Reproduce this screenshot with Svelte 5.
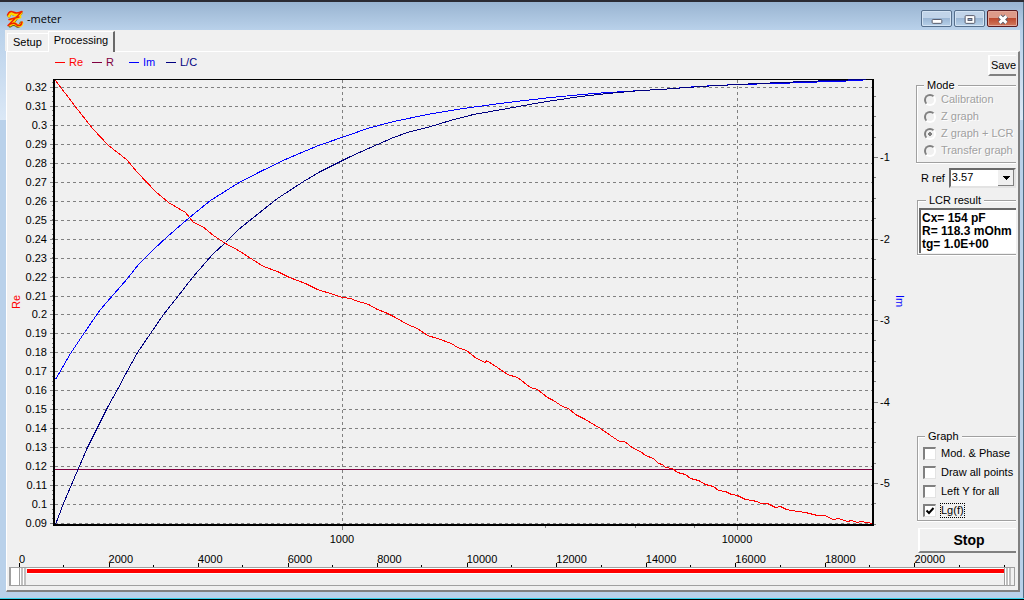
<script lang="ts">
  const yTicks = Array.from({ length: 24 }, (_, i) => ({
    y: Math.round(87 + (i * 436) / 23),
    label: String((32 - i) / 100)
  }));
  const leftMinor = Array.from({ length: 93 }, (_, i) => Math.round(82 + i * 4.74));
  const rightTicks = [1, 2, 3, 4, 5].map((n) => ({ y: Math.floor(76 + n * 81.5), label: `-${n}` }));
  const rightMinor = Array.from({ length: 22 }, (_, i) => Math.floor(96.5 + i * 20.37));
  const xTicks = [
    { x: 342, label: '1000' },
    { x: 737, label: '10000' }
  ];
  const xMinor = [545, 635, 694];

  const legend = [
    { x: 55, name: 'Re', color: '#ff0000' },
    { x: 92, name: 'R', color: '#800040' },
    { x: 129, name: 'Im', color: '#0000ff' },
    { x: 166, name: 'L/C', color: '#000080' }
  ];

  const re =
    '55,80 74,105 92,128 108,145 126,159 137,172 155,191 168,202 185,212 193,222 202,226 213,235 225,243 238,250 252,259 263,266 277,271 289,277 305,283 317,289 333,294 342,297 350,298 355,300 368,304 377,309 385,312 393,316 407,324 417,328 427,335 437,338 451,343 457,347 466,350 476,358 485,362 486,360 497,367 507,374 517,377 530,387 537,389 547,397 553,400 562,406 568,408 575,414 583,418 600,428 610,435 619,441 624,441 633,448 640,451 645,455 653,458 658,463 662,464 665,467 672,468 677,472 685,474 690,478 698,480 705,484 713,486 718,490 725,491 731,494 737,495 745,499 757,501 760,503 767,503 775,507 780,506 786,509 797,511 805,512 817,515 824,515 833,519 838,518 847,521 851,520 857,522 860,521 872,523';
  const im =
    '55,379 70,353 82,335 95,316 100,309 113,294 127,278 138,264 153,249 167,236 189,217 210,200 237,183 260,171 287,158 318,145 350,134 367,128 393,121 427,114 463,108 507,102 550,97 593,93 640,90 660,89 697,86 737,84 777,83 830,81 863,80';
  const lc =
    '55,524 63,503 77,470 87,447 97,427 107,407 117,389 126,372 137,352 150,333 163,314 167,309 182,290 192,277 212,254 225,242 238,229 263,209 277,198 303,181 320,171 350,156 377,144 393,137 410,131 427,127 450,120 473,114 507,108 540,102 580,96 607,93 640,90 660,89 700,86 737,84 780,82 830,80 866,79';

  const modes = ['Calibration', 'Z graph', 'Z graph + LCR', 'Transfer graph'];
  const mode = 'Z graph + LCR';

  let options = $state([
    { label: 'Mod. & Phase', on: false },
    { label: 'Draw all points', on: false },
    { label: 'Left Y for all', on: false },
    { label: 'Lg(f)', on: true }
  ]);

  const scale = Array.from({ length: 11 }, (_, i) => i * 2000);
  let low = $state(0);
  let high = $state(22000);
</script>

<div class="window">
  <header class="titlebar">
    <svg class="logo" viewBox="0 0 18 18" width="18" height="18" aria-hidden="true">
      <g fill="none" stroke-linecap="round" stroke-linejoin="round">
        <path d="M3 6Q4 2 7 4Q11 6 15 3L4 16Q8 13 11 16Q14 17 15 13" stroke="#6b5a10" stroke-width="3" />
        <path d="M3 6Q4 2 7 4Q11 6 15 3L4 15Q8 12 11 15Q15 17 16 13M5 10L14 7" stroke="#ffd800" stroke-width="3" />
        <path d="M1.500 5Q4 0 7 2Q11 4 16 1.500L2 15.500Q8 11 11 15Q15 17 16 12M3 9.500L13 7" stroke="#f02000" stroke-width="1.500" />
      </g>
    </svg>
    <h1>-meter</h1>
    <div class="controls">
      <button aria-label="Minimize">
        <svg viewBox="0 0 30 16" width="30" height="16"><rect x="10.5" y="8.5" width="10" height="4" rx="1" fill="#fff" stroke="#535666" /></svg>
      </button>
      <button aria-label="Maximize">
        <svg viewBox="0 0 30 16" width="30" height="16"><rect x="10.5" y="4.5" width="10" height="8" rx="1" fill="#fff" stroke="#535666" /><rect x="13.5" y="7.5" width="4" height="2" fill="#8fb0d6" stroke="#535666" /></svg>
      </button>
      <button class="close" aria-label="Close">
        <svg viewBox="0 0 30 16" width="30" height="16"><path d="M12 5L19 12M19 5L12 12" stroke="#535666" stroke-width="5" /><path d="M12 5L19 12M19 5L12 12" stroke="#fff" stroke-width="3" /></svg>
      </button>
    </div>
  </header>

  <nav class="tabs">
    <button class="tab">Setup</button>
    <button class="tab active">Processing</button>
  </nav>

  <main class="page">
    <div class="workspace">
      <svg class="chart" viewBox="7 52 908 501" role="img" aria-label="Impedance chart">
        {#each legend as item}
          <path d="M{item.x} 62.5h10" stroke={item.color} />
          <text x={item.x + 14} y="66" fill={item.color}>{item.name}</text>
        {/each}

        <g class="grid">
          {#each yTicks as t}<path d="M55 {t.y}.5H872" />{/each}
          {#each xTicks as t}<path d="M{t.x}.5 80V524" />{/each}
        </g>

        <g class="tick">
          {#each yTicks as t}<path d="M50 {t.y}.5h3" />{/each}
          {#each leftMinor as y}<path d="M52 {y}.5h1" />{/each}
          {#each rightTicks as t}<path d="M874 {t.y}.5h4" />{/each}
          {#each rightMinor as y}<path d="M874 {y}.5h2" />{/each}
          {#each xTicks as t}<path d="M{t.x}.5 526v4" />{/each}
          {#each xMinor as x}<path d="M{x}.5 526v2" />{/each}
        </g>

        <path d="M53 79.5H874" stroke="#000" />
        <path d="M54 79V526M873 79V526M53 525H874" stroke="#000" stroke-width="2" />

        <path d="M55 469.5H872" stroke="#800040" />
        <g class="curves" transform="translate(.5 .5)">
          <polyline points={re} stroke="#ff0000" />
          <polyline points={im} stroke="#0000ff" />
          <polyline points={lc} stroke="#000080" />
        </g>

        <g text-anchor="end">
          {#each yTicks as t}<text x="47" y={t.y + 4}>{t.label}</text>{/each}
        </g>
        {#each rightTicks as t}<text x="880" y={t.y + 4}>{t.label}</text>{/each}
        <g text-anchor="middle">
          {#each xTicks as t}<text x={t.x} y="543">{t.label}</text>{/each}
          <text transform="translate(20 302) rotate(-90)" fill="#ff0000">Re</text>
          <text transform="translate(896 301) rotate(90)" fill="#0000ff">Im</text>
        </g>
      </svg>

      <aside>
        <button class="push save">Save</button>

        <fieldset class="mode" disabled>
          <legend>Mode</legend>
          {#each modes as m}
            <label><input type="radio" name="mode" value={m} checked={m === mode} />{m}</label>
          {/each}
        </fieldset>

        <div class="ref">
          <label for="rref">R ref</label>
          <select id="rref"><option>3.57</option></select>
        </div>

        <fieldset class="result">
          <legend>LCR result</legend>
          <output>Cx= 154 pF<br />R= 118.3 mOhm<br />tg= 1.0E+00</output>
        </fieldset>

        <fieldset class="graph">
          <legend>Graph</legend>
          {#each options as o, i}
            <label><input type="checkbox" bind:checked={o.on} /><span class:focus={i === 3}>{o.label}</span></label>
          {/each}
        </fieldset>

        <button class="push stop">Stop</button>
      </aside>
    </div>

    <div class="scale">
      {#each scale as n}<span>{n}</span>{/each}
    </div>
    <div class="track">
      <div class="range"></div>
      <input class="low" type="range" min="0" max="22000" bind:value={low} aria-label="Lowest frequency" />
      <input class="high" type="range" min="0" max="22000" bind:value={high} aria-label="Highest frequency" />
    </div>
  </main>
</div>

<style>
  :global(body) {
    background: #b9d1ea;
  }

  .window {
    box-sizing: border-box;
    display: flex;
    flex-direction: column;
    min-height: 100vh;
    padding: 0 4px 7px 6px;
    overflow: hidden;
    border-top: 2px solid #2b2b33;
    border-bottom: 1px solid #000;
    box-shadow: inset 0 -1px #35d0e8, inset -1px 0 #4d6a80;
    background: linear-gradient(#99b4d1, #b9d1ea 28px, #dbe8f6 118px, #b9d1ea 118px);
    font: 11px/13px "Liberation Sans", Arial, sans-serif;
    color: #000;
  }

  button,
  input,
  select {
    font: inherit;
    color: inherit;
    margin: 0;
  }

  .titlebar {
    display: flex;
    align-items: center;
    height: 28px;
    box-sizing: border-box;
    padding: 5px 0 0 6px;
    margin: 0 -3px 0 -6px;
    background: linear-gradient(#99b4d1, #b9d1ea);
  }

  h1 {
    flex: 1;
    margin: 0 0 0 3px;
    font: 11px/16px "Open Sans", "Noto Sans", sans-serif;
  }

  .controls {
    display: flex;
    gap: 2px;
    margin-right: 5px;
  }

  .controls button {
    display: flex;
    justify-content: center;
    align-items: center;
    width: 31px;
    height: 17px;
    padding: 0;
    overflow: hidden;
    border: 1px solid #566f8c;
    border-radius: 2px;
    box-shadow: inset 0 0 0 1px #d3e3f3;
    background: linear-gradient(#c1d4e9 50%, #9bb7d5 50%, #b7d0e8);
  }

  .controls .close {
    border-color: #5a1a20;
    box-shadow: inset 0 0 0 1px #e3a99c;
    background: linear-gradient(#dd9a89 45%, #bd4a30 50%, #d17a5e);
  }

  .tabs {
    display: flex;
    align-items: flex-end;
    height: 21px;
    margin-left: -1px;
    padding-left: 1px;
    background: #f0f0f0;
  }

  .tab {
    height: 18px;
    margin-left: 1px;
    padding: 0 6px 0 5px;
    border: solid #fff;
    border-width: 1px 0 0 1px;
    background: #f0f0f0;
  }

  .tab.active {
    box-sizing: content-box;
    z-index: 1;
    height: 17px;
    margin: 0 0 -1px;
    padding: 0 5px 3px;
    border-right: 2px solid #696969;
  }

  .page {
    flex: 1;
    border: 1px solid #fff;
    border-width: 1px 2px 2px 1px;
    border-right-color: #808080;
    border-bottom-color: #808080;
    padding-bottom: 4px;
    background: #f0f0f0;
  }

  .workspace {
    display: flex;
    padding-right: 2px;
  }

  .chart {
    flex: 1;
    min-width: 0;
    shape-rendering: crispEdges;
    font-size: 11px;
  }

  .grid {
    stroke: #808080;
    stroke-dasharray: 3 3;
  }

  .tick {
    stroke: #808080;
  }

  .curves {
    fill: none;
    stroke-width: 1;
  }

  aside {
    display: flex;
    flex-direction: column;
    width: 101px;
    overflow: hidden;
    padding-top: 3px;
    box-sizing: border-box;
  }

  .push {
    box-sizing: border-box;
    border: solid #fff;
    border-width: 1px 0 2px 2px;
    border-bottom-color: #808080;
    background: #f0f0f0;
    flex: none;
  }

  .save {
    height: 21px;
    margin: 0 0 0 73px;
    padding: 0 0 0 1px;
    text-align: left;
  }

  .stop {
    height: 25px;
    margin: 7px -2px 0 3px;
    padding-top: 2px;
    font-size: 14px;
    font-weight: bold;
  }

  fieldset {
    min-width: 0;
    margin: 0 -6px 0 2px;
    padding: 0;
    border: 1px solid #a0a0a0;
    box-shadow: inset 1px 1px #fff, 0 1px #fff;
  }

  legend {
    margin-left: 7px;
    padding: 0 3px;
    line-height: 12px;
    background: #f0f0f0;
  }

  fieldset label {
    display: flex;
    align-items: center;
    white-space: nowrap;
  }

  .mode {
    margin: 3px -6px 0 1px;
    padding-bottom: 3px;
    color: #a0a0a0;
    text-shadow: 1px 1px #fff;
  }

  .mode legend {
    color: #000;
  }

  .mode label {
    height: 17px;
    gap: 5px;
    padding-left: 7px;
  }

  input[type='radio'] {
    appearance: none;
    width: 12px;
    height: 12px;
    border: 2px solid;
    border-color: #808080 #fff #fff #808080;
    border-radius: 50%;
  }

  input[type='radio']:checked {
    background: radial-gradient(circle, #808080 2px, transparent 2px);
  }

  .ref {
    display: flex;
    align-items: center;
    gap: 4px;
    margin-top: 5px;
    padding-left: 6px;
  }

  .ref label {
    white-space: nowrap;
  }

  select {
    appearance: none;
    flex: 1;
    min-width: 0;
    height: 20px;
    padding: 0 18px 1px 1px;
    border: 2px solid;
    border-color: #696969 #e3e3e3 #e3e3e3 #696969;
    border-radius: 0;
    background:
      linear-gradient(#000, #000) right 4px top 6px / 7px 1px no-repeat,
      linear-gradient(#000, #000) right 5px top 7px / 5px 1px no-repeat,
      linear-gradient(#000, #000) right 6px top 8px / 3px 1px no-repeat,
      linear-gradient(#000, #000) right 7px top 9px / 1px 1px no-repeat,
      linear-gradient(#f0f0f0, #f0f0f0) right 1px top 0 / 15px 15px no-repeat,
      linear-gradient(#808080, #808080) right / 16px 100% no-repeat,
      #fff;
  }

  .result {
    margin-top: 6px;
    padding: 2px 0 1px 1px;
  }

  .result output {
    display: block;
    padding: 2px 0 2px 1px;
    border: solid #696969;
    border-width: 2px 0 0 2px;
    background: #fff;
    font-size: 12px;
    font-weight: bold;
    white-space: nowrap;
  }

  .graph {
    margin-top: auto;
  }

  .graph label {
    height: 19px;
    gap: 5px;
    padding-left: 5px;
  }

  .graph label:nth-of-type(1) {
    margin-top: 2px;
  }

  input[type='checkbox'] {
    appearance: none;
    width: 13px;
    height: 13px;
    border: solid;
    border-width: 2px 1px 1px 2px;
    border-color: #808080 #e3e3e3 #e3e3e3 #808080;
    background: #fff;
  }

  input[type='checkbox']:checked {
    background: #fff url("data:image/svg+xml,%3Csvg xmlns='http://www.w3.org/2000/svg' viewBox='0 0 10 10'%3E%3Cpath d='M1.5 4.5L4 7L8.500 2' fill='none' stroke='%23000' stroke-width='2'/%3E%3C/svg%3E") center / 10px 10px no-repeat;
  }

  .focus {
    outline: 1px dotted #000;
  }

  .scale {
    display: grid;
    grid-template-columns: repeat(11, 1fr);
    height: 14px;
    margin: 0 13px 0 12px;
    border: solid;
    border-width: 0 1px 0 0;
    border-image: linear-gradient(transparent 11px, #000 11px) 1;
  }

  .scale span {
    line-height: 13px;
    background:
      linear-gradient(#000, #000) left bottom / 1px 4px no-repeat,
      linear-gradient(#000, #000) 50% bottom / 1px 2px no-repeat;
  }

  .track {
    display: grid;
    height: 19px;
    box-sizing: border-box;
    margin: 0 3px 0 2px;
    padding-left: 8px;
    border: solid #a0a0a0;
    border-width: 1px 1px 1px 2px;
    background: linear-gradient(90deg, #fff 8px, #f0f0f0 8px);
  }

  .range {
    grid-area: 1 / 1;
    height: 4px;
    margin: 1px 10px 0 8px;
    background: #f00;
    box-shadow: 0 0 0 1px #fff;
  }

  .track input {
    grid-area: 1 / 1;
    appearance: none;
    width: 100%;
    height: 17px;
    background: none;
    pointer-events: none;
  }

  .track input::-webkit-slider-thumb {
    appearance: none;
    pointer-events: auto;
    width: 8px;
    height: 17px;
    background: linear-gradient(90deg, #a0a0a0 1px, #fff 1px 2px, #c0c0c0 2px 4px, #fff 4px 5px, #c0c0c0 5px 7px, #f0f0f0 7px);
  }

  .track .high::-webkit-slider-thumb {
    width: 10px;
  }
</style>
